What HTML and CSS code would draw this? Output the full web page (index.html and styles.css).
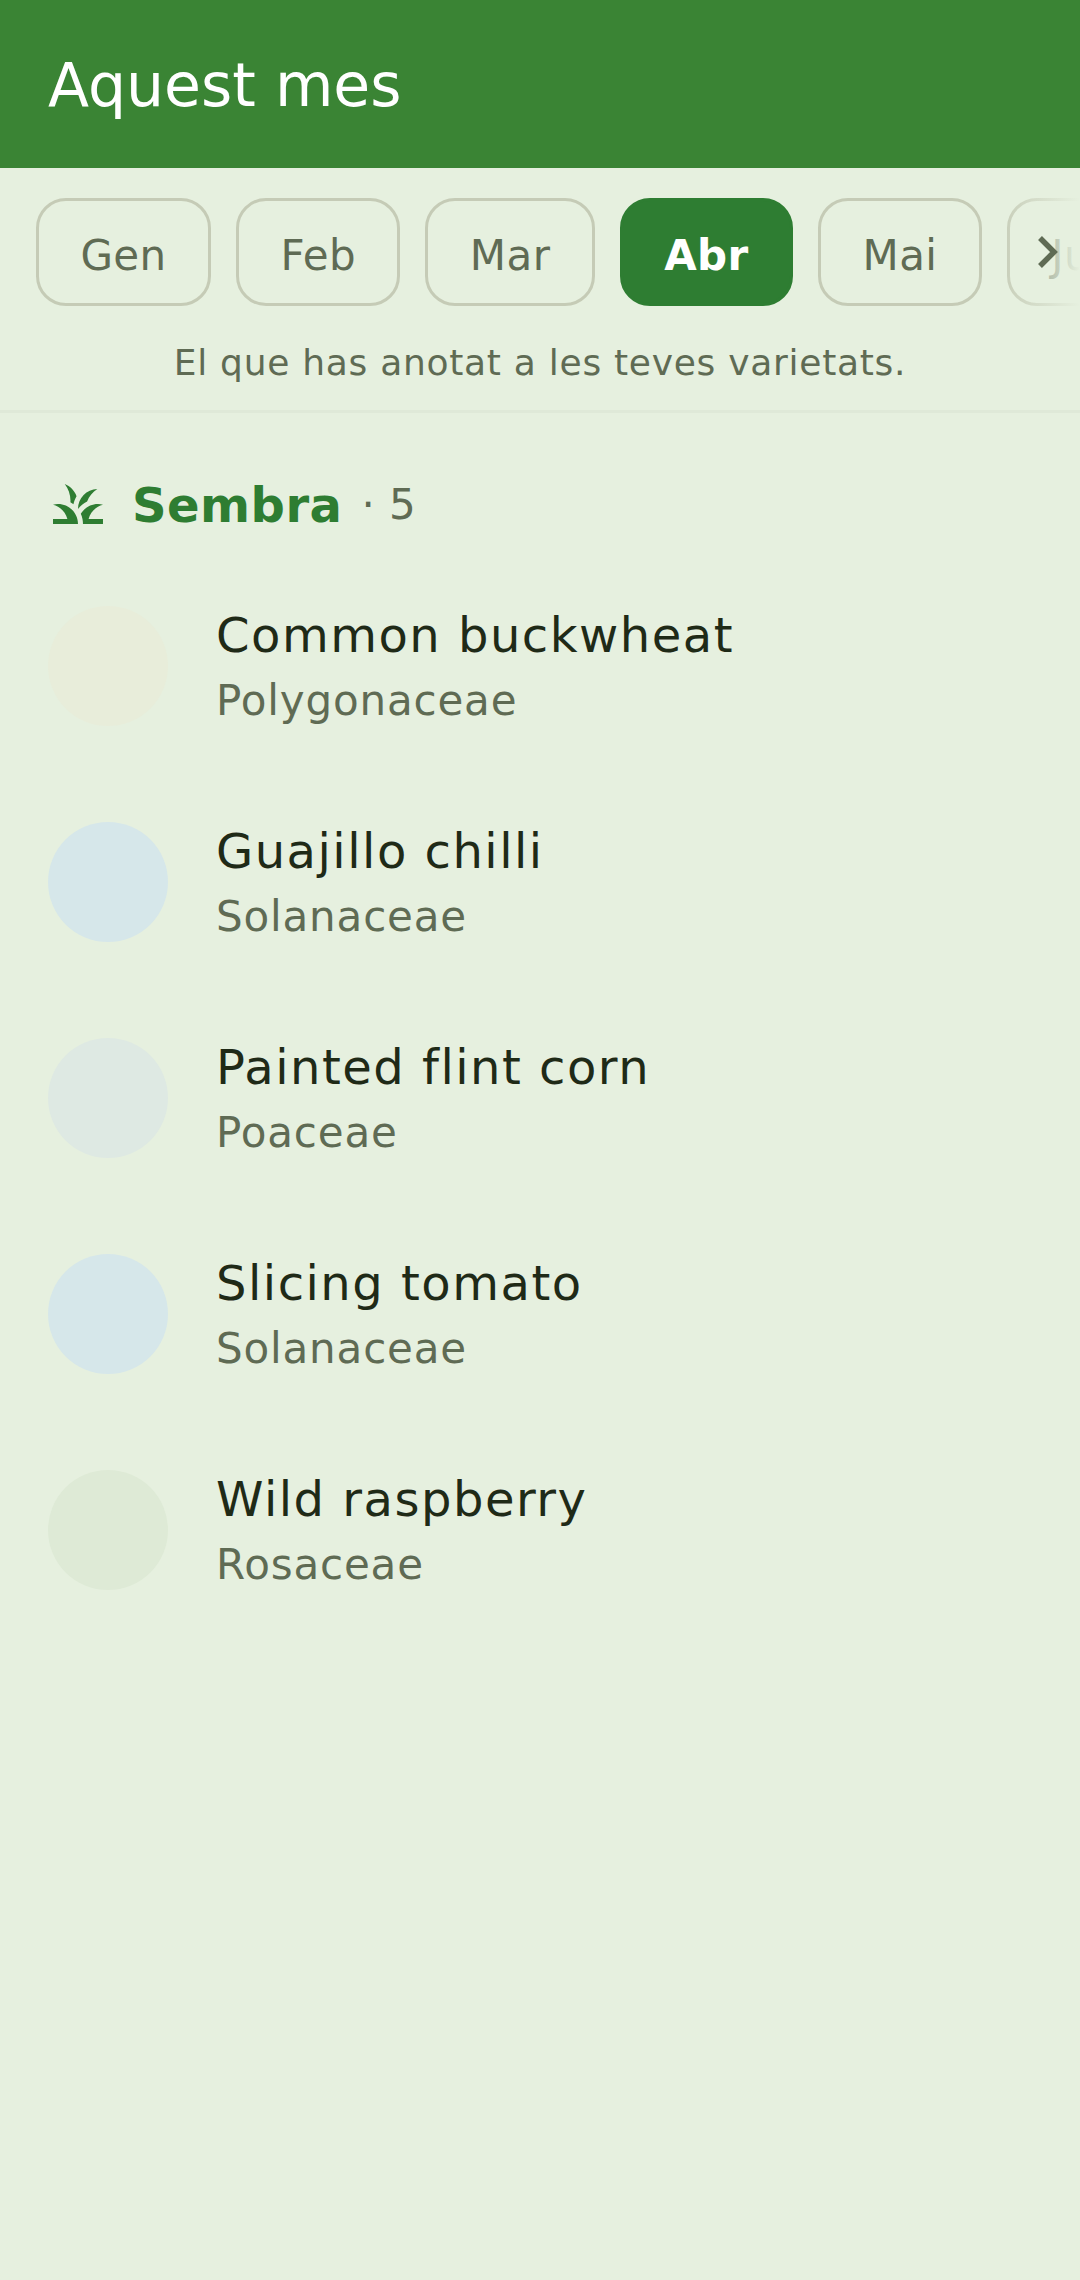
FILE: index.html
```html
<!DOCTYPE html>
<html lang="ca">
<head>
<meta charset="utf-8">
<title>Aquest mes</title>
<link rel="stylesheet" href="styles.css">
</head>
<body>
<header class="topbar"><h1 class="title">Aquest mes</h1></header>
<section class="months">
  <div class="chips">
    <div class="chip">Gen</div>
    <div class="chip">Feb</div>
    <div class="chip">Mar</div>
    <div class="chip chip-active">Abr</div>
    <div class="chip">Mai</div>
    <div class="chip">Jun</div>
  </div>
  <div class="fade"></div>
  <svg class="chev" viewBox="0 0 20 32"><path d="M2.5 2 L16.5 16 L2.5 30" fill="none" stroke="#5f6b54" stroke-width="5.5"/></svg>
</section>
<p class="hint">El que has anotat a les teves varietats.</p>
<main class="content">
  <div class="section-head">
    <svg class="grass" viewBox="0 0 24 24"><path fill="#2e7d32" d="M12,20H2v-2h5.75l0,0C7.02,15.19,4.81,12.99,2,12.26C2.64,12.1,3.31,12,4,12C8.42,12,12,15.58,12,20z M22,12.26C21.36,12.1,20.69,12,20,12c-2.93,0-5.48,1.58-6.88,3.93c0.29,0.66,0.53,1.35,0.67,2.07c0.13,0.65,0.2,1.32,0.2,2h8v-2h-5.75C16.98,15.19,19.19,12.99,22,12.26z M15.64,11.02c0.78-2.09,2.23-3.84,4.09-5C15.44,6.16,12,9.67,12,14c0,0.01,0,0.02,0,0.02c0.95-1.27,2.2-2.3,3.64-3z M11.42,8.85C10.58,6.66,8.88,4.89,6.7,4C8.14,5.86,9,8.18,9,10.71c0,0.21-0.03,0.41-0.04,0.61c0.43,0.24,0.83,0.52,1.22,0.82C10.39,11.01,10.83,9.86,11.42,8.85z"/></svg>
    <span class="section-name">Sembra</span>
    <span class="section-count">· 5</span>
  </div>
  <ul class="list">
    <li class="row"><div class="dot dot-a"></div><div><div class="name">Common buckwheat</div><div class="family">Polygonaceae</div></div></li>
    <li class="row"><div class="dot dot-b"></div><div><div class="name">Guajillo chilli</div><div class="family">Solanaceae</div></div></li>
    <li class="row"><div class="dot dot-c"></div><div><div class="name">Painted flint corn</div><div class="family">Poaceae</div></div></li>
    <li class="row"><div class="dot dot-b"></div><div><div class="name">Slicing tomato</div><div class="family">Solanaceae</div></div></li>
    <li class="row"><div class="dot dot-d"></div><div><div class="name">Wild raspberry</div><div class="family">Rosaceae</div></div></li>
  </ul>
</main>
</body>
</html>
```
FILE: styles.css
```css
* { box-sizing: border-box; }
html, body { margin: 0; padding: 0; }
body {
  width: 1080px;
  height: 2280px;
  overflow: hidden;
  background: #e6f0df;
  font-family: "DejaVu Sans", sans-serif;
}
.topbar {
  height: 168px;
  background: #3a8434;
  display: flex;
  align-items: center;
  padding: 2px 0 0 48px;
}
.title {
  margin: 0;
  font-size: 60px;
  font-weight: 400;
  color: #fff;
}
.months {
  position: relative;
  height: 168px;
  padding: 30px 0 0 36px;
  overflow: hidden;
}
.chips { display: flex; gap: 25px; }
.chip {
  flex: none;
  height: 108px;
  padding: 6px 41.4px 0;
  border: 3px solid #c5cbb6;
  border-radius: 30px;
  display: flex;
  align-items: center;
  font-size: 42px;
  letter-spacing: 0.42px;
  color: #5f6b54;
}
.chip-active {
  background: #2e7d32;
  border-color: #2e7d32;
  color: #fff;
  font-weight: 700;
}
.fade {
  position: absolute;
  top: 0;
  right: 0;
  width: 84px;
  height: 100%;
  background: linear-gradient(to right, rgba(230,240,223,0), #e6f0df);
}
.chev {
  position: absolute;
  top: 68px;
  left: 1037px;
  width: 21px;
  height: 32px;
}
.hint {
  margin: 0;
  height: 77px;
  padding-top: 6px;
  border-bottom: 3px solid #dfe9d8;
  text-align: center;
  font-size: 36px;
  letter-spacing: 0.72px;
  color: #5f6b54;
}
.content { padding: 0 48px; }
.section-head {
  display: flex;
  align-items: center;
  height: 60px;
  margin-top: 61px;
}
.grass { width: 60px; height: 60px; margin-right: 24px; }
.section-name { font-size: 48px; font-weight: 700; letter-spacing: 0.48px; color: #2e7d32; padding-top: 2px; }
.section-count { font-size: 42px; letter-spacing: 0.42px; color: #5f6b54; margin-left: 19px; }
.list { list-style: none; margin: 72px 0 0; padding: 0; }
.row {
  display: flex;
  align-items: center;
  gap: 48px;
  height: 120px;
  margin-bottom: 96px;
}
.dot { width: 120px; height: 120px; border-radius: 50%; flex: none; }
.dot-a { background: #e8edda; }
.dot-b { background: #d6e7ea; }
.dot-c { background: #dee9e3; }
.dot-d { background: #deead6; }
.name { font-size: 48px; letter-spacing: 1.5px; color: #1f2a17; line-height: 64px; }
.family { font-size: 42px; letter-spacing: 0.84px; color: #5f6b54; line-height: 56px; margin-top: 6px; }
```
